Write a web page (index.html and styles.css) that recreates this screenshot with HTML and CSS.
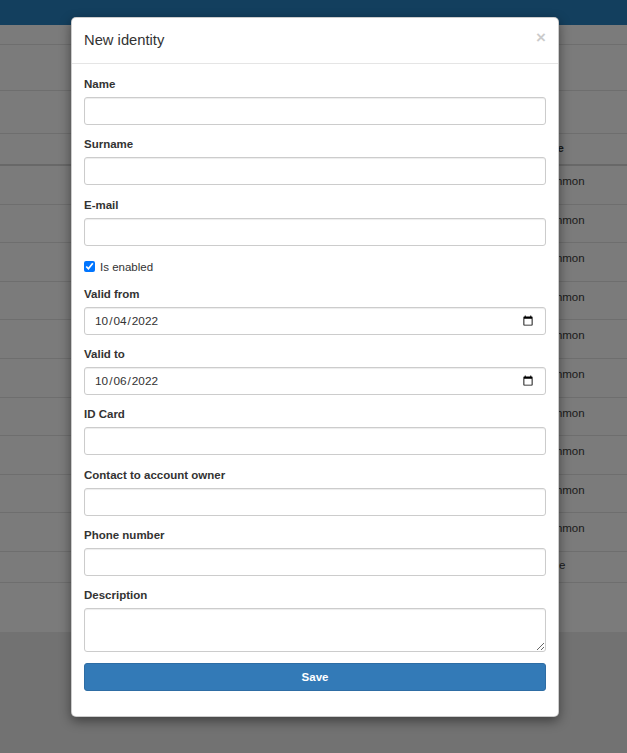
FILE: index.html
```html
<!DOCTYPE html>
<html lang="en">
<head>
<meta charset="utf-8">
<title>New identity</title>
<link rel="stylesheet" href="styles.css">
</head>
<body>
<div class="page">
  <div class="navbar"></div>
  <div class="toolbar"></div>
  <div class="filters"></div>
  <div class="caption"></div>
  <div class="thead"><span class="cell-spacer"></span><span class="th">Type</span></div>
  <div class="row"><span class="cell-spacer"></span><span>Common</span></div>
  <div class="row"><span class="cell-spacer"></span><span>Common</span></div>
  <div class="row"><span class="cell-spacer"></span><span>Common</span></div>
  <div class="row"><span class="cell-spacer"></span><span>Common</span></div>
  <div class="row"><span class="cell-spacer"></span><span>Common</span></div>
  <div class="row"><span class="cell-spacer"></span><span>Common</span></div>
  <div class="row"><span class="cell-spacer"></span><span>Common</span></div>
  <div class="row"><span class="cell-spacer"></span><span>Common</span></div>
  <div class="row"><span class="cell-spacer"></span><span>Common</span></div>
  <div class="row"><span class="cell-spacer"></span><span>Common</span></div>
  <div class="row row-last"><span class="cell-spacer"></span><span>None</span></div>
  <div class="pager"></div>
</div>

<div class="modal">
  <div class="modal-header">
    <h4 class="modal-title">New identity</h4>
    <button class="close" type="button">&times;</button>
  </div>
  <form class="modal-body">
    <div class="form-group">
      <label class="lbl">Name</label>
      <input class="form-control" type="text">
    </div>
    <div class="form-group">
      <label class="lbl">Surname</label>
      <input class="form-control" type="text">
    </div>
    <div class="form-group">
      <label class="lbl">E-mail</label>
      <input class="form-control" type="text">
    </div>
    <div class="checkbox">
      <input type="checkbox" id="enabled" checked>
      <label for="enabled">Is enabled</label>
    </div>
    <div class="form-group">
      <label class="lbl">Valid from</label>
      <input class="form-control date" type="date" value="2022-10-04">
    </div>
    <div class="form-group">
      <label class="lbl">Valid to</label>
      <input class="form-control date" type="date" value="2022-10-06">
    </div>
    <div class="form-group">
      <label class="lbl">ID Card</label>
      <input class="form-control" type="text">
    </div>
    <div class="form-group">
      <label class="lbl">Contact to account owner</label>
      <input class="form-control" type="text">
    </div>
    <div class="form-group">
      <label class="lbl">Phone number</label>
      <input class="form-control" type="text">
    </div>
    <div class="form-group desc">
      <label class="lbl">Description</label>
      <textarea class="form-control area"></textarea>
    </div>
    <button class="btn-save" type="button">Save</button>
  </form>
</div>
</body>
</html>
```

FILE: styles.css
```css
html, body {
  margin: 0;
  padding: 0;
}
body {
  width: 627px;
  height: 753px;
  overflow: hidden;
  background: #727272;
  font-family: "Liberation Sans", Arial, sans-serif;
  font-size: 11.5px;
  color: #333;
}
.page {
  display: flex;
  flex-direction: column;
}
.navbar {
  height: 25px;
  background: #133f5e;
}
.toolbar {
  height: 19px;
  background: #7b7b7b;
  border-bottom: 1px solid #6e6e6e;
}
.filters {
  height: 45px;
  background: #7b7b7b;
  border-bottom: 1px solid #6e6e6e;
}
.caption {
  height: 42px;
  background: #7b7b7b;
  border-bottom: 1px solid #6e6e6e;
}
.thead, .row {
  display: grid;
  grid-template-columns: 538px 1fr;
  background: #7b7b7b;
  box-sizing: border-box;
  color: #1a1a1a;
}
.thead {
  height: 32px;
  padding-top: 8px;
  border-bottom: 2px solid #686868;
  font-weight: bold;
}
.row {
  height: 38.6px;
  padding-top: 9px;
  border-bottom: 1px solid #6e6e6e;
}
.row-last {
  height: 31px;
  padding-top: 7px;
}
.pager {
  height: 49px;
  background: #7b7b7b;
}

.modal {
  position: absolute;
  left: 71px;
  top: 17px;
  width: 488px;
  box-sizing: border-box;
  background: #fff;
  border: 1px solid rgba(0, 0, 0, 0.2);
  border-radius: 5px;
  box-shadow: 0 4px 12px rgba(0, 0, 0, 0.45);
}
.modal-header {
  display: flex;
  justify-content: space-between;
  align-items: flex-start;
  padding: 12px 12px 13px 12px;
  border-bottom: 1px solid #e5e5e5;
}
.modal-title {
  margin: 0;
  font-size: 14.75px;
  line-height: 20px;
  font-weight: normal;
  color: #333;
}
.close {
  border: 0;
  background: transparent;
  padding: 0;
  margin: -1px 0 0 0;
  font-family: "Liberation Sans", Arial, sans-serif;
  font-size: 17px;
  line-height: 17px;
  font-weight: bold;
  color: #000;
  opacity: 0.2;
}
.modal-body {
  display: block;
  margin: 0;
  padding: 12px 12px 25px 12px;
}
.form-group {
  margin-bottom: 11.3px;
}
.lbl {
  display: block;
  font-weight: bold;
  line-height: 16px;
  margin-bottom: 5px;
}
.form-control {
  display: block;
  width: 100%;
  height: 28px;
  box-sizing: border-box;
  margin: 0;
  padding: 5px 10px;
  font-family: "Liberation Sans", Arial, sans-serif;
  font-size: 11.5px;
  color: #555;
  background: #fff;
  border: 1px solid #ccc;
  border-radius: 3px;
  box-shadow: inset 0 1px 1px rgba(0, 0, 0, 0.075);
}
.date {
  font-size: 11.8px;
  padding: 3px 9px;
  color: #333;
}
.area {
  height: 44px;
}
.desc {
  margin-bottom: 11px;
}
.checkbox {
  display: flex;
  align-items: center;
  height: 20px;
  margin-bottom: 9px;
}
.checkbox input {
  width: 11px;
  height: 11px;
  margin: 0 5px 0 0;
  accent-color: #0075ff;
}
.checkbox label {
  line-height: 16px;
}
.btn-save {
  display: block;
  width: 100%;
  height: 28px;
  box-sizing: border-box;
  margin: 0;
  padding: 0;
  background: #337ab7;
  border: 1px solid #2e6da4;
  border-radius: 3px;
  color: #fff;
  font-family: "Liberation Sans", Arial, sans-serif;
  font-size: 11.5px;
  font-weight: bold;
}
```
